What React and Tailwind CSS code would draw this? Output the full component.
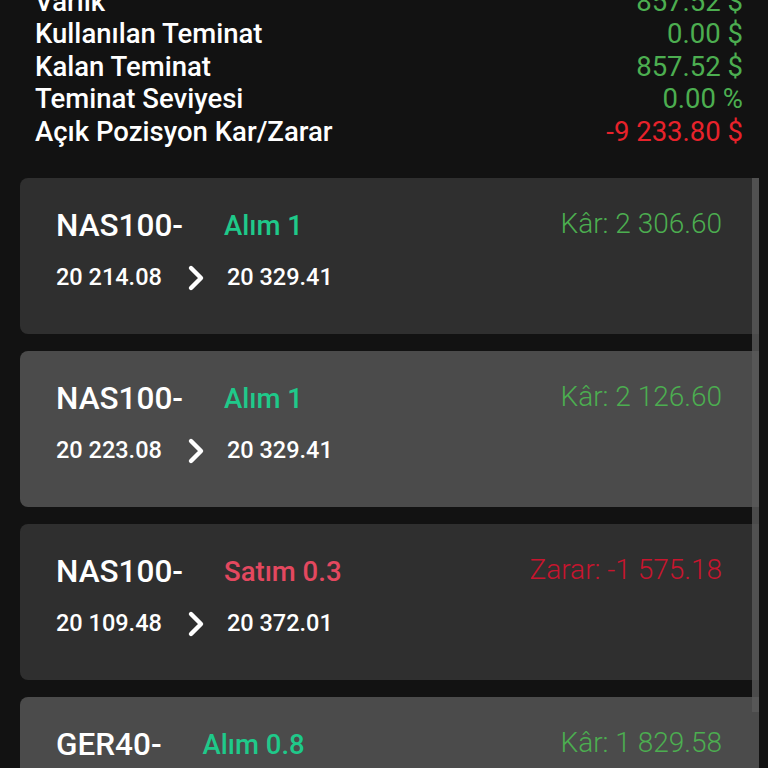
import React from 'react';

const summary = [
  { label: 'Varlık', value: '857.52 $', tone: 'pos' },
  { label: 'Kullanılan Teminat', value: '0.00 $', tone: 'pos' },
  { label: 'Kalan Teminat', value: '857.52 $', tone: 'pos' },
  { label: 'Teminat Seviyesi', value: '0.00 %', tone: 'pos' },
  { label: 'Açık Pozisyon Kar/Zarar', value: '-9 233.80 $', tone: 'neg' },
];

const positions = [
  { symbol: 'NAS100-', side: 'Alım 1', buy: true, open: '20 214.08', now: '20 329.41', pl: 'Kâr: 2 306.60', win: true, active: false },
  { symbol: 'NAS100-', side: 'Alım 1', buy: true, open: '20 223.08', now: '20 329.41', pl: 'Kâr: 2 126.60', win: true, active: true },
  { symbol: 'NAS100-', side: 'Satım 0.3', buy: false, open: '20 109.48', now: '20 372.01', pl: 'Zarar: -1 575.18', win: false, active: false },
  { symbol: 'GER40-', side: 'Alım 0.8', buy: true, open: '15 402.10', now: '15 630.80', pl: 'Kâr: 1 829.58', win: true, active: true },
];

function Chevron() {
  return (
    <svg width="18" height="28" viewBox="0 0 18 28" className="ml-[25px] mr-[22px]">
      <path d="M4 4 L14 14 L4 24" fill="none" stroke="#ffffff" strokeWidth="4.4" strokeLinecap="round" strokeLinejoin="round" />
    </svg>
  );
}

function PositionCard({ p }) {
  return (
    <div className={`h-[156px] rounded-l-[8px] pl-[36px] pr-[37px] pt-[30px] ${p.active ? 'bg-[#4b4b4b]' : 'bg-[#2f2f2f]'}`}>
      <div className="flex items-start justify-between">
        <div>
          <div className="flex items-center h-[36px]">
            <span className="text-[31.5px] font-medium text-white leading-none">{p.symbol}</span>
            <span className={`ml-[41px] text-[27.5px] font-medium leading-none ${p.buy ? 'text-[#1fc98a]' : 'text-[#e4485f]'}`}>{p.side}</span>
          </div>
          <div className="flex items-center mt-[20px] text-[23.5px] font-medium text-white leading-none">
            <span>{p.open}</span>
            <Chevron />
            <span>{p.now}</span>
          </div>
        </div>
        <div className={`text-[28px] font-light leading-[32px] ${p.win ? 'text-[#4cae50]' : 'text-[#c8152e]'}`}>{p.pl}</div>
      </div>
    </div>
  );
}

export default function App() {
  return (
    <div className="w-[768px] h-[768px] overflow-hidden bg-[#121212] relative" style={{ fontFamily: 'Roboto, "Noto Sans", sans-serif' }}>
      <div className="mt-[-15px] pl-[35px] pr-[25px]">
        {summary.map((r) => (
          <div key={r.label} className="flex justify-between h-[32.5px] items-center text-[27.5px] leading-none">
            <span className="font-medium text-white">{r.label}</span>
            <span className={r.tone === 'pos' ? 'text-[#4cae50]' : 'text-[#e8222b]'}>{r.value}</span>
          </div>
        ))}
      </div>

      <div className="mt-[30px] pl-[20px] pr-[9px] flex flex-col gap-[17px]">
        {positions.map((p, i) => (
          <PositionCard key={i} p={p} />
        ))}
      </div>

      {/* scrollbar thumb */}
      <div className="absolute left-[752px] top-[178px] w-[7px] h-[534px] bg-[#5a5a5a]/80" />
    </div>
  );
}
